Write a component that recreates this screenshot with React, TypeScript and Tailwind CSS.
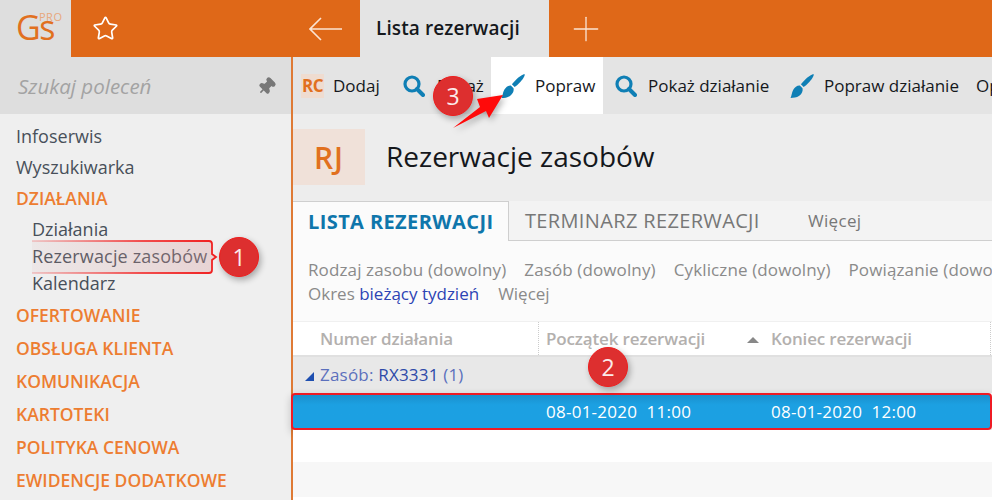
import { Star, Pin, Plus } from 'lucide-react';

const sections = ['OFERTOWANIE', 'OBSŁUGA KLIENTA', 'KOMUNIKACJA', 'KARTOTEKI', 'POLITYKA CENOWA', 'EWIDENCJE DODATKOWE'];

function Brush({ className }: { className?: string }) {
  return (
    <svg viewBox="0 0 22 22" className={className} fill="#0f7fb5">
      <path d="M21.8 0.2 C22 2 19.5 5.5 17 8 C15.5 9.5 14 11 12.5 12 L10 9.5 C11 8 12.5 6.5 14 5 C16.5 2.5 20 0 21.8 0.2 Z" />
      <path d="M9 10.5 L11.5 13 C12 15.5 11 18 8.5 20 C6 21.8 3 22 0.5 22 C1.5 20 1.5 17.5 3 14.5 C4.5 12 6.5 10.3 9 10.5 Z" />
    </svg>
  );
}

function Magnifier({ className }: { className?: string }) {
  return (
    <svg viewBox="0 0 22 22" className={className} fill="none" stroke="#0f7fb5">
      <circle cx="9" cy="9" r="7" strokeWidth="3.2" />
      <path d="M14 14 L20 20" strokeWidth="4" strokeLinecap="round" />
    </svg>
  );
}

function Badge({ n, className }: { n: number; className: string }) {
  return (
    <div
      className={`absolute flex h-[40px] w-[40px] items-center justify-center rounded-full border border-[#f01c1c] bg-[#dd2f2f] text-[23px] font-medium text-[#fbeaea] shadow-[2px_3px_6px_rgba(0,0,0,0.3)] ${className}`}
    >
      {n}
    </div>
  );
}

function ToolItem({ icon, label, active, className }: { icon: React.ReactNode; label: string; active?: boolean; className: string }) {
  return (
    <div className={`flex h-full shrink-0 items-center whitespace-nowrap text-[17px] text-[#15181c] ${active ? 'bg-white' : ''} ${className}`}>
      {icon}
      <span>{label}</span>
    </div>
  );
}

export default function App() {
  return (
    <div className="relative flex h-[500px] w-[992px] flex-col overflow-hidden bg-white font-['Open_Sans','Noto_Sans',sans-serif]">
      {/* Top bar */}
      <div className="flex h-[57px] shrink-0 bg-[#df6818]">
        <div className="relative flex w-[71px] shrink-0 bg-[#dedede] text-[#e1701f]">
          <span className="ml-[16px] mt-[7px] text-[34px] font-medium leading-[40px] tracking-[-1.5px]">Gs</span>
          <span className="absolute left-[39px] top-[11px] text-[11px] font-medium leading-[12px] tracking-[0.5px] text-[#e8a77c]">PRO</span>
        </div>
        <div className="flex w-[70px] items-center pl-[21px]">
          <Star size={27} strokeWidth={1.5} className="text-white" />
        </div>
        <div className="w-[149px]" />
        <div className="flex w-[70px] items-center justify-center">
          <svg viewBox="0 0 33 24" className="h-[24px] w-[33px]" fill="none" stroke="#fbe3d2" strokeWidth="1.6">
            <path d="M12 1 L1 12 L12 23 M1 12 H33" />
          </svg>
        </div>
        <div className="flex w-[189px] items-center bg-[#e4e4e4] pl-[16px] text-[19px] font-semibold tracking-[0.1px] text-[#15181c]">Lista rezerwacji</div>
        <div className="flex w-[74px] items-center justify-center">
          <Plus size={40} strokeWidth={0.8} className="text-[#fbe3d2]" />
        </div>
      </div>

      <div className="flex min-h-0 flex-1">
        {/* Sidebar */}
        <aside className="flex w-[293px] shrink-0 flex-col border-r-2 border-[#df7a35] bg-[#efefef]">
          <div className="flex h-[57px] shrink-0 items-center justify-between bg-[#dedede] pl-[18px] pr-[15px] pt-[1px]">
            <span className="text-[20.5px] italic text-[#a3a3a3]">Szukaj poleceń</span>
            <Pin size={19} fill="#787878" className="rotate-45 text-[#787878]" />
          </div>
          <div className="flex flex-col pl-[16px] pt-[7px] text-[18px] leading-[31px] text-[#48505a]">
            <span>Infoserwis</span>
            <span>Wyszukiwarka</span>
            <span className="text-[17.5px] font-semibold text-[#ed7d31]">DZIAŁANIA</span>
            <div className="flex flex-col pl-[16px] leading-[27px]">
              <span className="mt-[2px]">Działania</span>
              <span className="relative tracking-[0.15px]">
                Rezerwacje zasobów
                {/* callout frame, fades out to the left */}
                <svg className="absolute left-0 top-[-3px] h-[34px] w-[186px]" viewBox="0 0 186 34" fill="none">
                  <defs>
                    <linearGradient id="edge" x1="0" x2="1" y1="0" y2="0">
                      <stop offset="0" stopColor="#f23c3c" stopOpacity="0.2" />
                      <stop offset="0.6" stopColor="#f23c3c" stopOpacity="0.9" />
                      <stop offset="1" stopColor="#f02020" />
                    </linearGradient>
                    <linearGradient id="tint" x1="0" x2="1" y1="0" y2="0">
                      <stop offset="0" stopColor="#d9a0a0" stopOpacity="0.1" />
                      <stop offset="1" stopColor="#d9a0a0" stopOpacity="0.35" />
                    </linearGradient>
                  </defs>
                  <path
                    d="M0 1 H177 Q180 1 180 4 V14 L184 17 L180 20 V30 Q180 33 177 33 H0"
                    fill="url(#tint)"
                    stroke="url(#edge)"
                    strokeWidth="1.8"
                  />
                </svg>
              </span>
              <span>Kalendarz</span>
            </div>
            <div className="mt-[2px] flex flex-col text-[17.5px] font-semibold leading-[33px] text-[#ed7d31]">
              {sections.map((s) => (
                <span key={s}>{s}</span>
              ))}
            </div>
          </div>
        </aside>

        {/* Main */}
        <main className="flex min-w-0 flex-1 flex-col">
          {/* Toolbar */}
          <div className="flex h-[57px] shrink-0 overflow-hidden bg-[#e4e4e4]">
            <ToolItem
              className="w-[101px] pl-[8px]"
              icon={<span className="mr-[9px] flex h-[24px] w-[23px] items-center justify-center overflow-hidden bg-[#efdcd0] text-[17px] font-bold tracking-[-0.5px] text-[#e1701f]">RC</span>}
              label="Dodaj"
            />
            <ToolItem
              className="w-[97px] pl-[9px]"
              icon={<Magnifier className="mr-[12px] h-[22px] w-[22px]" />}
              label="Pokaż"
            />
            <ToolItem
              active
              className="w-[112px] pl-[10px]"
              icon={<Brush className="mr-[10px] h-[24px] w-[24px]" />}
              label="Popraw"
            />
            <ToolItem
              className="w-[175px] pl-[12px]"
              icon={<Magnifier className="mr-[11px] h-[22px] w-[22px]" />}
              label="Pokaż działanie"
            />
            <ToolItem
              className="w-[198px] pl-[12px]"
              icon={<Brush className="mr-[10px] h-[24px] w-[24px]" />}
              label="Popraw działanie"
            />
            <ToolItem className="" icon={null} label="Opcje" />
          </div>

          {/* Title */}
          <div className="flex h-[87px] shrink-0 items-center bg-[#ededed] pb-[1px]">
            <div className="flex h-[56px] w-[72px] items-center justify-center bg-[#f0e1d9] text-[30px] font-semibold tracking-[1px] text-[#e1701f]">RJ</div>
            <h1 className="-mt-[2px] ml-[21px] text-[28px] font-normal text-[#15181c]">Rezerwacje zasobów</h1>
          </div>

          {/* Tabs */}
          <div className="flex h-[40px] shrink-0 items-stretch border-b border-[#cfcfcf] bg-[#f3f3f3]">
            <div className="-mb-px flex w-[216px] items-center whitespace-nowrap border-r border-t border-[#cfcfcf] bg-[#fbfbfb] pl-[15px] text-[20px] font-bold tracking-[0.4px] text-[#0f76ab]">LISTA REZERWACJI</div>
            <div className="flex w-[299px] items-center whitespace-nowrap pl-[16px] text-[20px] tracking-[0.35px] text-[#777]">TERMINARZ REZERWACJI</div>
            <div className="flex items-center text-[17px] tracking-[0.3px] text-[#777]">Więcej</div>
          </div>

          {/* Filters */}
          <div className="flex h-[80px] shrink-0 flex-col bg-[#fbfbfb] pl-[15px] pt-[17px] text-[17px] leading-[24px] text-[#8a8a8a]">
            <div className="flex gap-[18px] whitespace-nowrap tracking-[0.12px]">
              <span>Rodzaj zasobu (dowolny)</span>
              <span>Zasób (dowolny)</span>
              <span>Cykliczne (dowolny)</span>
              <span>Powiązanie (dowolny)</span>
            </div>
            <div className="flex gap-[19px] whitespace-nowrap">
              <span>
                Okres <span className="text-[#2c43b4]">bieżący tydzień</span>
              </span>
              <span>Więcej</span>
            </div>
          </div>

          {/* Table */}
          <div className="flex h-[36px] shrink-0 items-center border-b-2 border-t border-b-[#e0e0e0] border-t-[#f0f0f0] bg-white text-[17px] font-semibold tracking-[-0.15px] text-[#b3b0ae]">
            <div className="flex h-full w-[246px] items-center border-r border-dotted border-[#ccc] pl-[27px]">Numer działania</div>
            <div className="relative flex h-full w-[232px] items-center pl-[7px]">
              Początek rezerwacji
              <span className="absolute right-[12px] top-[15px] h-0 w-0 border-x-[6px] border-b-[6px] border-x-transparent border-b-[#888]" />
            </div>
            <div className="flex h-full w-[220px] items-center border-r border-dotted border-[#ccc]">Koniec rezerwacji</div>
          </div>
          <div className="flex h-[36px] shrink-0 items-center bg-[#e8e8e8] pl-[12px] text-[17px] tracking-[0.2px] text-[#5b70bd]">
            <span className="mr-[6px] mt-[3px] h-0 w-0 border-b-[9px] border-l-[9px] border-b-[#1e4fb0] border-l-transparent" />
            <span>
              Zasób: <span className="text-[#2d4aa8]">RX3331</span> (1)
            </span>
          </div>
          <div className="-ml-[2px] flex h-[37px] shrink-0 items-center rounded-[4px] border-2 border-[#ef1b24] bg-linear-to-b from-[#1a90cd] to-[#1ca0e2] to-30% text-[17px] tracking-[0.25px] text-white shadow-[0_3px_8px_rgba(0,0,0,0.2)]">
            <span className="ml-[253px] w-[225px] whitespace-pre">08-01-2020  11:00</span>
            <span className="whitespace-pre">08-01-2020  12:00</span>
          </div>
          <div className="h-[32px] shrink-0 bg-white" />
          <div className="h-[35px] shrink-0 bg-[#f7f7f7]" />
        </main>
      </div>

      {/* Annotations */}
      <Badge n={1} className="left-[219px] top-[237px]" />
      <Badge n={2} className="left-[588px] top-[347px]" />
      <Badge n={3} className="left-[433px] top-[76px]" />
      <svg className="absolute left-[450px] top-[92px] h-[40px] w-[60px]" viewBox="0 0 60 40" style={{ filter: 'drop-shadow(2px 3px 3px rgba(0,0,0,0.3))' }}>
        <path d="M3 36 L30 15 L27 7 L53 3 L39 26 L36 19 Z" fill="#ff0a0a" />
      </svg>
    </div>
  );
}
